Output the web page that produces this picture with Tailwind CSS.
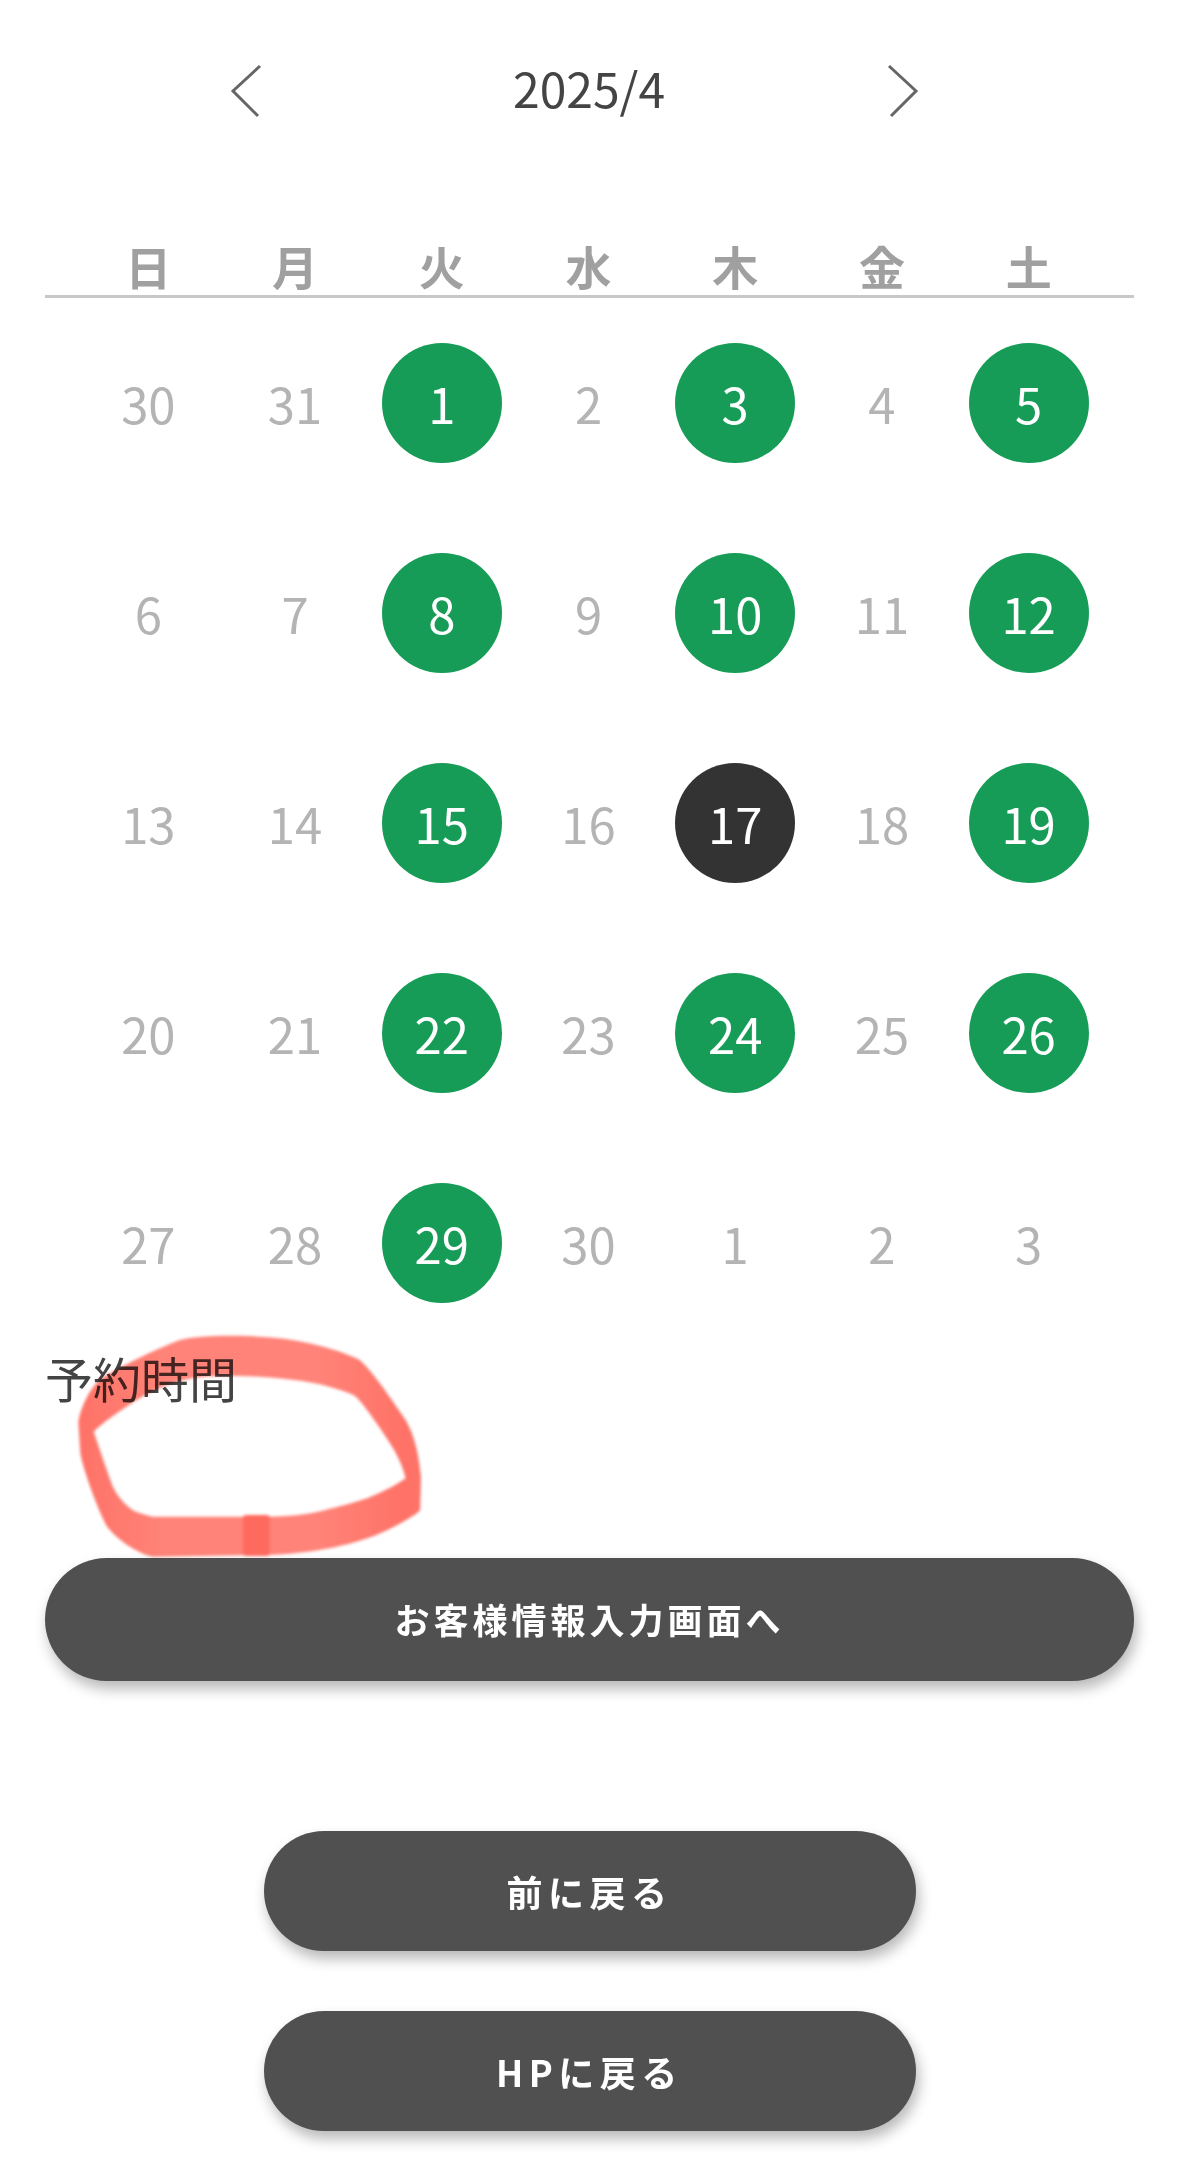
<!DOCTYPE html>
<html lang="ja">
<head>
  <meta charset="UTF-8" />
  <title>予約カレンダー</title>
  <script src="https://cdn.jsdelivr.net/npm/@tailwindcss/browser@4"></script>
</head>
<body class="bg-white font-['Noto_Sans_CJK_JP','Noto_Sans',sans-serif]">
  <div class="relative w-[1179px] h-[2165px] overflow-hidden px-[45px]">

    <!-- Month nav -->
    <div class="ml-[184px] pt-[64px] flex items-center text-[#444]">
      <svg class="w-[34px] h-[54px]" viewBox="0 0 34 54" fill="none" stroke="#666" stroke-width="3"><path d="M31 2 L4 27 L29 52"/></svg>
      <div class="ml-[250px] w-[150px] text-center whitespace-nowrap text-[48px] leading-[50px] -mt-[9px] font-normal">2025/4</div>
      <svg class="ml-[223px] w-[34px] h-[54px]" viewBox="0 0 34 54" fill="none" stroke="#666" stroke-width="3"><path d="M3 2 L30 27 L5 52"/></svg>
    </div>

    <!-- Weekdays -->
    <div class="mt-[117px] grid grid-cols-7 pl-[30px] pr-[32px] border-b-[3px] border-[#c8c8c8] text-center text-[#a0a0a0] text-[46px] leading-[60px] font-bold">
      <div>日</div><div>月</div><div>火</div><div>水</div><div>木</div><div>金</div><div>土</div>
    </div>

    <!-- Days -->
    <div class="mt-[45px] grid grid-cols-7 gap-y-[90px] pl-[30px] pr-[32px] text-[49px] font-normal text-[#b4b4b4] justify-items-center">
      <div class="size-[120px] flex items-center justify-center">30</div>
      <div class="size-[120px] flex items-center justify-center">31</div>
      <div class="size-[120px] flex items-center justify-center rounded-full bg-[#169c57] text-white">1</div>
      <div class="size-[120px] flex items-center justify-center">2</div>
      <div class="size-[120px] flex items-center justify-center rounded-full bg-[#169c57] text-white">3</div>
      <div class="size-[120px] flex items-center justify-center">4</div>
      <div class="size-[120px] flex items-center justify-center rounded-full bg-[#169c57] text-white">5</div>

      <div class="size-[120px] flex items-center justify-center">6</div>
      <div class="size-[120px] flex items-center justify-center">7</div>
      <div class="size-[120px] flex items-center justify-center rounded-full bg-[#169c57] text-white">8</div>
      <div class="size-[120px] flex items-center justify-center">9</div>
      <div class="size-[120px] flex items-center justify-center rounded-full bg-[#169c57] text-white">10</div>
      <div class="size-[120px] flex items-center justify-center">11</div>
      <div class="size-[120px] flex items-center justify-center rounded-full bg-[#169c57] text-white">12</div>

      <div class="size-[120px] flex items-center justify-center">13</div>
      <div class="size-[120px] flex items-center justify-center">14</div>
      <div class="size-[120px] flex items-center justify-center rounded-full bg-[#169c57] text-white">15</div>
      <div class="size-[120px] flex items-center justify-center">16</div>
      <div class="size-[120px] flex items-center justify-center rounded-full bg-[#333333] text-white">17</div>
      <div class="size-[120px] flex items-center justify-center">18</div>
      <div class="size-[120px] flex items-center justify-center rounded-full bg-[#169c57] text-white">19</div>

      <div class="size-[120px] flex items-center justify-center">20</div>
      <div class="size-[120px] flex items-center justify-center">21</div>
      <div class="size-[120px] flex items-center justify-center rounded-full bg-[#169c57] text-white">22</div>
      <div class="size-[120px] flex items-center justify-center">23</div>
      <div class="size-[120px] flex items-center justify-center rounded-full bg-[#169c57] text-white">24</div>
      <div class="size-[120px] flex items-center justify-center">25</div>
      <div class="size-[120px] flex items-center justify-center rounded-full bg-[#169c57] text-white">26</div>

      <div class="size-[120px] flex items-center justify-center">27</div>
      <div class="size-[120px] flex items-center justify-center">28</div>
      <div class="size-[120px] flex items-center justify-center rounded-full bg-[#169c57] text-white">29</div>
      <div class="size-[120px] flex items-center justify-center">30</div>
      <div class="size-[120px] flex items-center justify-center">1</div>
      <div class="size-[120px] flex items-center justify-center">2</div>
      <div class="size-[120px] flex items-center justify-center">3</div>
    </div>

    <div class="mt-[44px] text-[48px] leading-[60px] font-normal text-[#444]">予約時間</div>

    <!-- Buttons -->
    <div class="mt-[151px] h-[123px] rounded-full bg-[#505050] shadow-[3px_8px_14px_rgba(0,0,0,0.28)] flex items-center justify-center text-white text-[35px] font-semibold tracking-[4px]">お客様情報入力画面へ</div>
    <div class="mt-[150px] mx-auto w-[652px] h-[120px] rounded-full bg-[#505050] shadow-[3px_8px_14px_rgba(0,0,0,0.28)] flex items-center justify-center text-white text-[36px] font-semibold tracking-[5.5px]">前に戻る</div>
    <div class="mt-[60px] mx-auto w-[652px] h-[120px] rounded-full bg-[#505050] shadow-[3px_8px_14px_rgba(0,0,0,0.28)] flex items-center justify-center text-white text-[36px] font-semibold tracking-[5.5px]">HPに戻る</div>

    <!-- Red marker annotation over the screenshot -->
    <svg class="absolute left-0 top-[1300px] w-[600px] h-[400px] mix-blend-multiply blur-[1.5px]" viewBox="0 0 1568 1200" preserveAspectRatio="none">
      <defs>
        <linearGradient id="marker" x1="0" y1="0" x2="1" y2="0">
          <stop offset="0" stop-color="#ff7267"/>
          <stop offset="0.25" stop-color="#ff8378"/>
          <stop offset="0.7" stop-color="#ff8378"/>
          <stop offset="0.95" stop-color="#ff7267"/>
        </linearGradient>
      </defs>
      <path fill="url(#marker)" fill-rule="evenodd" d="M205 370 C207 330 235 265 260 240 C290 215 400 150 470 120 C520 105 640 105 700 112 C780 118 880 145 940 180 C975 215 1030 310 1060 360 C1085 410 1095 470 1100 530 L1098 630 C1085 650 1000 700 960 715 C900 740 800 762 700 765 L400 770 C370 765 310 725 280 680 C255 630 215 500 210 460 Z M245 395 C270 365 330 320 350 305 C400 270 440 250 480 240 C520 228 580 226 620 228 C700 230 800 240 860 260 C890 270 920 280 930 290 C950 310 1010 410 1030 450 C1045 480 1055 510 1060 535 C1030 560 990 580 960 595 C920 610 880 622 850 630 C800 645 750 650 700 650 L400 650 C375 645 350 635 340 625 C320 605 305 585 295 560 C285 530 255 430 245 395 Z"/>
      <rect x="635" y="645" width="70" height="123" rx="8" fill="#ff6a5e"/>
    </svg>
  </div>
</body>
</html>
